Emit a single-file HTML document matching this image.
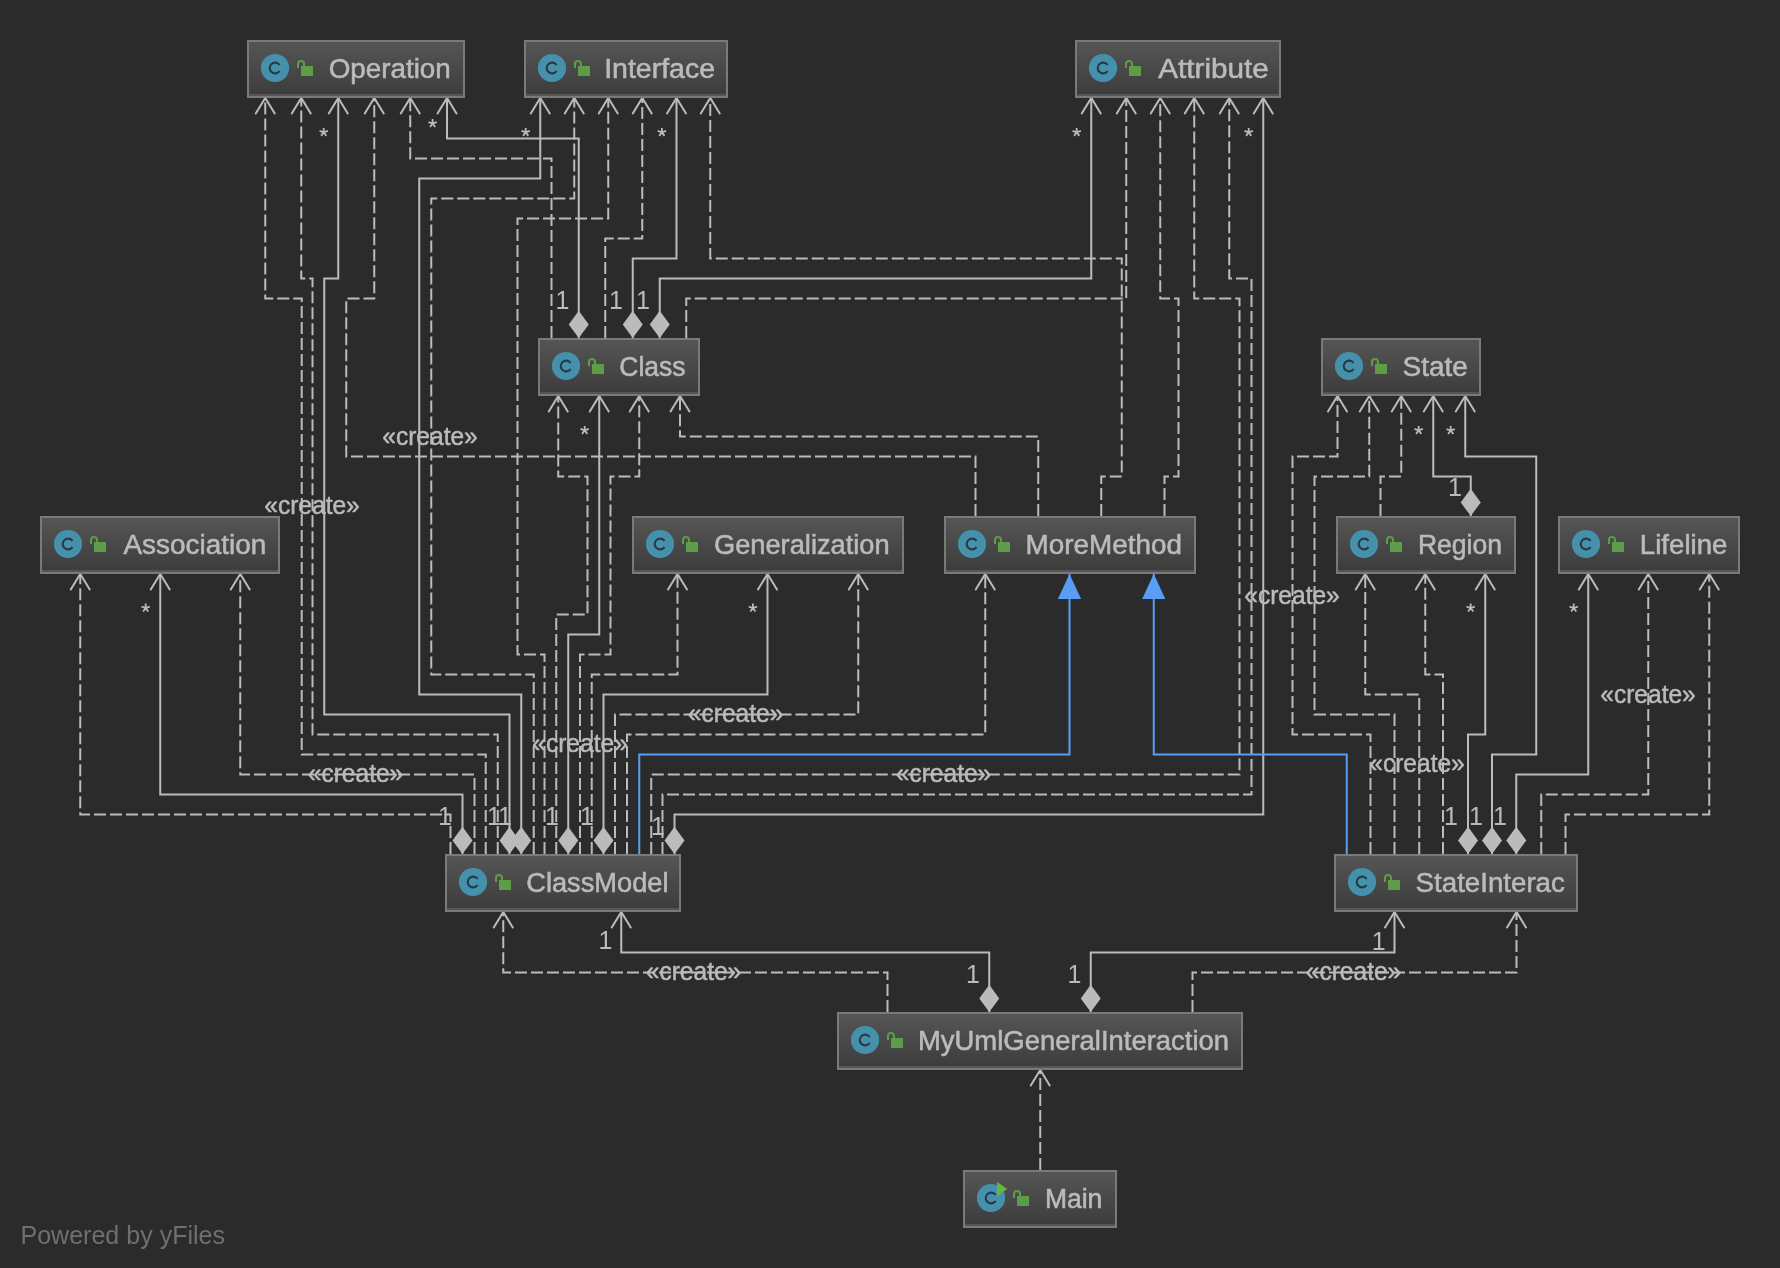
<!DOCTYPE html><html><head><meta charset="utf-8"><style>html,body{margin:0;padding:0;background:#2b2b2b;overflow:hidden}svg{display:block;will-change:transform}</style></head><body>
<svg width="1780" height="1268" viewBox="0 0 1780 1268">
<defs><linearGradient id="ng" x1="0" y1="0" x2="0" y2="1"><stop offset="0" stop-color="#555555"/><stop offset="1" stop-color="#3c3c3c"/></linearGradient></defs>
<rect width="1780" height="1268" fill="#2b2b2b"/>
<path d="M485.75 854 L485.75 754.5 L301.75 754.5 L301.75 298.5 L265.25 298.5 L265.25 98" fill="none" stroke="#bbbbbb" stroke-width="2" stroke-dasharray="12 4"/>
<path d="M255.75 113.5 L265.25 98 L274.75 113.5" fill="none" stroke="#bbbbbb" stroke-width="2" stroke-linecap="round" stroke-linejoin="miter"/>
<path d="M497.75 854 L497.75 734.5 L312.5 734.5 L312.5 278.5 L301.25 278.5 L301.25 98" fill="none" stroke="#bbbbbb" stroke-width="2" stroke-dasharray="12 4"/>
<path d="M291.75 113.5 L301.25 98 L310.75 113.5" fill="none" stroke="#bbbbbb" stroke-width="2" stroke-linecap="round" stroke-linejoin="miter"/>
<path d="M509.5 854 L509.5 714.5 L324.25 714.5 L324.25 278.5 L338.25 278.5 L338.25 98" fill="none" stroke="#bbbbbb" stroke-width="2"/>
<path d="M328.75 113.5 L338.25 98 L347.75 113.5" fill="none" stroke="#bbbbbb" stroke-width="2" stroke-linecap="round" stroke-linejoin="miter"/>
<path d="M509.5 854 L499.5 840.4 L509.5 826.8 L519.5 840.4 Z" fill="#bbbbbb"/>
<path d="M975.5 516 L975.5 456.5 L346.25 456.5 L346.25 298.5 L374.25 298.5 L374.25 98" fill="none" stroke="#bbbbbb" stroke-width="2" stroke-dasharray="12 4"/>
<path d="M364.75 113.5 L374.25 98 L383.75 113.5" fill="none" stroke="#bbbbbb" stroke-width="2" stroke-linecap="round" stroke-linejoin="miter"/>
<path d="M551.5 338 L551.5 158.5 L410.25 158.5 L410.25 98" fill="none" stroke="#bbbbbb" stroke-width="2" stroke-dasharray="12 4"/>
<path d="M400.75 113.5 L410.25 98 L419.75 113.5" fill="none" stroke="#bbbbbb" stroke-width="2" stroke-linecap="round" stroke-linejoin="miter"/>
<path d="M578.75 338 L578.75 138.5 L447 138.5 L447 98" fill="none" stroke="#bbbbbb" stroke-width="2"/>
<path d="M437.5 113.5 L447 98 L456.5 113.5" fill="none" stroke="#bbbbbb" stroke-width="2" stroke-linecap="round" stroke-linejoin="miter"/>
<path d="M578.75 338 L568.75 324.4 L578.75 310.8 L588.75 324.4 Z" fill="#bbbbbb"/>
<path d="M521.25 854 L521.25 694.5 L419.25 694.5 L419.25 178.5 L540.25 178.5 L540.25 98" fill="none" stroke="#bbbbbb" stroke-width="2"/>
<path d="M530.75 113.5 L540.25 98 L549.75 113.5" fill="none" stroke="#bbbbbb" stroke-width="2" stroke-linecap="round" stroke-linejoin="miter"/>
<path d="M521.25 854 L511.25 840.4 L521.25 826.8 L531.25 840.4 Z" fill="#bbbbbb"/>
<path d="M533.75 854 L533.75 674.5 L431.25 674.5 L431.25 198.5 L574.25 198.5 L574.25 98" fill="none" stroke="#bbbbbb" stroke-width="2" stroke-dasharray="12 4"/>
<path d="M564.75 113.5 L574.25 98 L583.75 113.5" fill="none" stroke="#bbbbbb" stroke-width="2" stroke-linecap="round" stroke-linejoin="miter"/>
<path d="M544.5 854 L544.5 654.5 L517.5 654.5 L517.5 218.5 L608.25 218.5 L608.25 98" fill="none" stroke="#bbbbbb" stroke-width="2" stroke-dasharray="12 4"/>
<path d="M598.75 113.5 L608.25 98 L617.75 113.5" fill="none" stroke="#bbbbbb" stroke-width="2" stroke-linecap="round" stroke-linejoin="miter"/>
<path d="M605.25 338 L605.25 238.5 L642.25 238.5 L642.25 98" fill="none" stroke="#bbbbbb" stroke-width="2" stroke-dasharray="12 4"/>
<path d="M632.75 113.5 L642.25 98 L651.75 113.5" fill="none" stroke="#bbbbbb" stroke-width="2" stroke-linecap="round" stroke-linejoin="miter"/>
<path d="M632.75 338 L632.75 258.5 L676.5 258.5 L676.5 98" fill="none" stroke="#bbbbbb" stroke-width="2"/>
<path d="M667 113.5 L676.5 98 L686 113.5" fill="none" stroke="#bbbbbb" stroke-width="2" stroke-linecap="round" stroke-linejoin="miter"/>
<path d="M632.75 338 L622.75 324.4 L632.75 310.8 L642.75 324.4 Z" fill="#bbbbbb"/>
<path d="M1101.25 516 L1101.25 476.5 L1121.75 476.5 L1121.75 258.5 L710.25 258.5 L710.25 98" fill="none" stroke="#bbbbbb" stroke-width="2" stroke-dasharray="12 4"/>
<path d="M700.75 113.5 L710.25 98 L719.75 113.5" fill="none" stroke="#bbbbbb" stroke-width="2" stroke-linecap="round" stroke-linejoin="miter"/>
<path d="M659.75 338 L659.75 278.5 L1091.25 278.5 L1091.25 98" fill="none" stroke="#bbbbbb" stroke-width="2"/>
<path d="M1081.75 113.5 L1091.25 98 L1100.75 113.5" fill="none" stroke="#bbbbbb" stroke-width="2" stroke-linecap="round" stroke-linejoin="miter"/>
<path d="M659.75 338 L649.75 324.4 L659.75 310.8 L669.75 324.4 Z" fill="#bbbbbb"/>
<path d="M686.25 338 L686.25 298.5 L1126.25 298.5 L1126.25 98" fill="none" stroke="#bbbbbb" stroke-width="2" stroke-dasharray="12 4"/>
<path d="M1116.75 113.5 L1126.25 98 L1135.75 113.5" fill="none" stroke="#bbbbbb" stroke-width="2" stroke-linecap="round" stroke-linejoin="miter"/>
<path d="M1164.5 516 L1164.5 476.5 L1178.5 476.5 L1178.5 298.5 L1160.25 298.5 L1160.25 98" fill="none" stroke="#bbbbbb" stroke-width="2" stroke-dasharray="12 4"/>
<path d="M1150.75 113.5 L1160.25 98 L1169.75 113.5" fill="none" stroke="#bbbbbb" stroke-width="2" stroke-linecap="round" stroke-linejoin="miter"/>
<path d="M651.25 854 L651.25 774.5 L1239.5 774.5 L1239.5 298.5 L1194.25 298.5 L1194.25 98" fill="none" stroke="#bbbbbb" stroke-width="2" stroke-dasharray="12 4"/>
<path d="M1184.75 113.5 L1194.25 98 L1203.75 113.5" fill="none" stroke="#bbbbbb" stroke-width="2" stroke-linecap="round" stroke-linejoin="miter"/>
<path d="M662.5 854 L662.5 794.5 L1251.5 794.5 L1251.5 278.5 L1229.25 278.5 L1229.25 98" fill="none" stroke="#bbbbbb" stroke-width="2" stroke-dasharray="12 4"/>
<path d="M1219.75 113.5 L1229.25 98 L1238.75 113.5" fill="none" stroke="#bbbbbb" stroke-width="2" stroke-linecap="round" stroke-linejoin="miter"/>
<path d="M674.5 854 L674.5 814.5 L1263.25 814.5 L1263.25 98" fill="none" stroke="#bbbbbb" stroke-width="2"/>
<path d="M1253.75 113.5 L1263.25 98 L1272.75 113.5" fill="none" stroke="#bbbbbb" stroke-width="2" stroke-linecap="round" stroke-linejoin="miter"/>
<path d="M674.5 854 L664.5 840.4 L674.5 826.8 L684.5 840.4 Z" fill="#bbbbbb"/>
<path d="M556.25 854 L556.25 614.5 L587.5 614.5 L587.5 476.5 L558.25 476.5 L558.25 396" fill="none" stroke="#bbbbbb" stroke-width="2" stroke-dasharray="12 4"/>
<path d="M548.75 411.5 L558.25 396 L567.75 411.5" fill="none" stroke="#bbbbbb" stroke-width="2" stroke-linecap="round" stroke-linejoin="miter"/>
<path d="M568.25 854 L568.25 634.5 L599.25 634.5 L599.25 396" fill="none" stroke="#bbbbbb" stroke-width="2"/>
<path d="M589.75 411.5 L599.25 396 L608.75 411.5" fill="none" stroke="#bbbbbb" stroke-width="2" stroke-linecap="round" stroke-linejoin="miter"/>
<path d="M568.25 854 L558.25 840.4 L568.25 826.8 L578.25 840.4 Z" fill="#bbbbbb"/>
<path d="M580 854 L580 654.5 L610.5 654.5 L610.5 476.5 L639.25 476.5 L639.25 396" fill="none" stroke="#bbbbbb" stroke-width="2" stroke-dasharray="12 4"/>
<path d="M629.75 411.5 L639.25 396 L648.75 411.5" fill="none" stroke="#bbbbbb" stroke-width="2" stroke-linecap="round" stroke-linejoin="miter"/>
<path d="M1038.25 516 L1038.25 436.5 L680 436.5 L680 396" fill="none" stroke="#bbbbbb" stroke-width="2" stroke-dasharray="12 4"/>
<path d="M670.5 411.5 L680 396 L689.5 411.5" fill="none" stroke="#bbbbbb" stroke-width="2" stroke-linecap="round" stroke-linejoin="miter"/>
<path d="M450.5 854 L450.5 814.5 L80.25 814.5 L80.25 574" fill="none" stroke="#bbbbbb" stroke-width="2" stroke-dasharray="12 4"/>
<path d="M70.75 589.5 L80.25 574 L89.75 589.5" fill="none" stroke="#bbbbbb" stroke-width="2" stroke-linecap="round" stroke-linejoin="miter"/>
<path d="M462.5 854 L462.5 794.5 L160.25 794.5 L160.25 574" fill="none" stroke="#bbbbbb" stroke-width="2"/>
<path d="M150.75 589.5 L160.25 574 L169.75 589.5" fill="none" stroke="#bbbbbb" stroke-width="2" stroke-linecap="round" stroke-linejoin="miter"/>
<path d="M462.5 854 L452.5 840.4 L462.5 826.8 L472.5 840.4 Z" fill="#bbbbbb"/>
<path d="M474.5 854 L474.5 774.5 L240.25 774.5 L240.25 574" fill="none" stroke="#bbbbbb" stroke-width="2" stroke-dasharray="12 4"/>
<path d="M230.75 589.5 L240.25 574 L249.75 589.5" fill="none" stroke="#bbbbbb" stroke-width="2" stroke-linecap="round" stroke-linejoin="miter"/>
<path d="M591.75 854 L591.75 674.5 L677.5 674.5 L677.5 574" fill="none" stroke="#bbbbbb" stroke-width="2" stroke-dasharray="12 4"/>
<path d="M668 589.5 L677.5 574 L687 589.5" fill="none" stroke="#bbbbbb" stroke-width="2" stroke-linecap="round" stroke-linejoin="miter"/>
<path d="M603.5 854 L603.5 694.5 L767.5 694.5 L767.5 574" fill="none" stroke="#bbbbbb" stroke-width="2"/>
<path d="M758 589.5 L767.5 574 L777 589.5" fill="none" stroke="#bbbbbb" stroke-width="2" stroke-linecap="round" stroke-linejoin="miter"/>
<path d="M603.5 854 L593.5 840.4 L603.5 826.8 L613.5 840.4 Z" fill="#bbbbbb"/>
<path d="M615 854 L615 714.5 L858.25 714.5 L858.25 574" fill="none" stroke="#bbbbbb" stroke-width="2" stroke-dasharray="12 4"/>
<path d="M848.75 589.5 L858.25 574 L867.75 589.5" fill="none" stroke="#bbbbbb" stroke-width="2" stroke-linecap="round" stroke-linejoin="miter"/>
<path d="M627 854 L627 734.5 L985.25 734.5 L985.25 574" fill="none" stroke="#bbbbbb" stroke-width="2" stroke-dasharray="12 4"/>
<path d="M975.75 589.5 L985.25 574 L994.75 589.5" fill="none" stroke="#bbbbbb" stroke-width="2" stroke-linecap="round" stroke-linejoin="miter"/>
<path d="M639.25 854 L639.25 754.5 L1069.5 754.5 L1069.5 574" fill="none" stroke="#589df6" stroke-width="2"/>
<path d="M1057.9 599 L1069.5 574 L1081.1 599 Z" fill="#589df6"/>
<path d="M1346.75 854 L1346.75 754.5 L1153.75 754.5 L1153.75 574" fill="none" stroke="#589df6" stroke-width="2"/>
<path d="M1142.15 599 L1153.75 574 L1165.35 599 Z" fill="#589df6"/>
<path d="M1370.5 854 L1370.5 734.5 L1292.5 734.5 L1292.5 456.5 L1337.5 456.5 L1337.5 396" fill="none" stroke="#bbbbbb" stroke-width="2" stroke-dasharray="12 4"/>
<path d="M1328 411.5 L1337.5 396 L1347 411.5" fill="none" stroke="#bbbbbb" stroke-width="2" stroke-linecap="round" stroke-linejoin="miter"/>
<path d="M1394.5 854 L1394.5 714.5 L1314.5 714.5 L1314.5 476.5 L1369.25 476.5 L1369.25 396" fill="none" stroke="#bbbbbb" stroke-width="2" stroke-dasharray="12 4"/>
<path d="M1359.75 411.5 L1369.25 396 L1378.75 411.5" fill="none" stroke="#bbbbbb" stroke-width="2" stroke-linecap="round" stroke-linejoin="miter"/>
<path d="M1380.5 516 L1380.5 476.5 L1401.25 476.5 L1401.25 396" fill="none" stroke="#bbbbbb" stroke-width="2" stroke-dasharray="12 4"/>
<path d="M1391.75 411.5 L1401.25 396 L1410.75 411.5" fill="none" stroke="#bbbbbb" stroke-width="2" stroke-linecap="round" stroke-linejoin="miter"/>
<path d="M1470.75 516 L1470.75 476.5 L1433.25 476.5 L1433.25 396" fill="none" stroke="#bbbbbb" stroke-width="2"/>
<path d="M1423.75 411.5 L1433.25 396 L1442.75 411.5" fill="none" stroke="#bbbbbb" stroke-width="2" stroke-linecap="round" stroke-linejoin="miter"/>
<path d="M1470.75 516 L1460.75 502.4 L1470.75 488.8 L1480.75 502.4 Z" fill="#bbbbbb"/>
<path d="M1492 854 L1492 754.5 L1536.25 754.5 L1536.25 456.5 L1465.25 456.5 L1465.25 396" fill="none" stroke="#bbbbbb" stroke-width="2"/>
<path d="M1455.75 411.5 L1465.25 396 L1474.75 411.5" fill="none" stroke="#bbbbbb" stroke-width="2" stroke-linecap="round" stroke-linejoin="miter"/>
<path d="M1492 854 L1482 840.4 L1492 826.8 L1502 840.4 Z" fill="#bbbbbb"/>
<path d="M1419.25 854 L1419.25 694.5 L1365.25 694.5 L1365.25 574" fill="none" stroke="#bbbbbb" stroke-width="2" stroke-dasharray="12 4"/>
<path d="M1355.75 589.5 L1365.25 574 L1374.75 589.5" fill="none" stroke="#bbbbbb" stroke-width="2" stroke-linecap="round" stroke-linejoin="miter"/>
<path d="M1443 854 L1443 674.5 L1425.25 674.5 L1425.25 574" fill="none" stroke="#bbbbbb" stroke-width="2" stroke-dasharray="12 4"/>
<path d="M1415.75 589.5 L1425.25 574 L1434.75 589.5" fill="none" stroke="#bbbbbb" stroke-width="2" stroke-linecap="round" stroke-linejoin="miter"/>
<path d="M1468 854 L1468 734.5 L1485.25 734.5 L1485.25 574" fill="none" stroke="#bbbbbb" stroke-width="2"/>
<path d="M1475.75 589.5 L1485.25 574 L1494.75 589.5" fill="none" stroke="#bbbbbb" stroke-width="2" stroke-linecap="round" stroke-linejoin="miter"/>
<path d="M1468 854 L1458 840.4 L1468 826.8 L1478 840.4 Z" fill="#bbbbbb"/>
<path d="M1516.25 854 L1516.25 774.5 L1588.25 774.5 L1588.25 574" fill="none" stroke="#bbbbbb" stroke-width="2"/>
<path d="M1578.75 589.5 L1588.25 574 L1597.75 589.5" fill="none" stroke="#bbbbbb" stroke-width="2" stroke-linecap="round" stroke-linejoin="miter"/>
<path d="M1516.25 854 L1506.25 840.4 L1516.25 826.8 L1526.25 840.4 Z" fill="#bbbbbb"/>
<path d="M1541.25 854 L1541.25 794.5 L1648.25 794.5 L1648.25 574" fill="none" stroke="#bbbbbb" stroke-width="2" stroke-dasharray="12 4"/>
<path d="M1638.75 589.5 L1648.25 574 L1657.75 589.5" fill="none" stroke="#bbbbbb" stroke-width="2" stroke-linecap="round" stroke-linejoin="miter"/>
<path d="M1565.5 854 L1565.5 814.5 L1709.25 814.5 L1709.25 574" fill="none" stroke="#bbbbbb" stroke-width="2" stroke-dasharray="12 4"/>
<path d="M1699.75 589.5 L1709.25 574 L1718.75 589.5" fill="none" stroke="#bbbbbb" stroke-width="2" stroke-linecap="round" stroke-linejoin="miter"/>
<path d="M887.5 1012 L887.5 972.5 L503.25 972.5 L503.25 912" fill="none" stroke="#bbbbbb" stroke-width="2" stroke-dasharray="12 4"/>
<path d="M493.75 927.5 L503.25 912 L512.75 927.5" fill="none" stroke="#bbbbbb" stroke-width="2" stroke-linecap="round" stroke-linejoin="miter"/>
<path d="M989.25 1012 L989.25 952.5 L621.25 952.5 L621.25 912" fill="none" stroke="#bbbbbb" stroke-width="2"/>
<path d="M611.75 927.5 L621.25 912 L630.75 927.5" fill="none" stroke="#bbbbbb" stroke-width="2" stroke-linecap="round" stroke-linejoin="miter"/>
<path d="M989.25 1012 L979.25 998.4 L989.25 984.8 L999.25 998.4 Z" fill="#bbbbbb"/>
<path d="M1090.75 1012 L1090.75 952.5 L1394.5 952.5 L1394.5 912" fill="none" stroke="#bbbbbb" stroke-width="2"/>
<path d="M1385 927.5 L1394.5 912 L1404 927.5" fill="none" stroke="#bbbbbb" stroke-width="2" stroke-linecap="round" stroke-linejoin="miter"/>
<path d="M1090.75 1012 L1080.75 998.4 L1090.75 984.8 L1100.75 998.4 Z" fill="#bbbbbb"/>
<path d="M1192.5 1012 L1192.5 972.5 L1516.5 972.5 L1516.5 912" fill="none" stroke="#bbbbbb" stroke-width="2" stroke-dasharray="12 4"/>
<path d="M1507 927.5 L1516.5 912 L1526 927.5" fill="none" stroke="#bbbbbb" stroke-width="2" stroke-linecap="round" stroke-linejoin="miter"/>
<path d="M1040.25 1170 L1040.25 1070" fill="none" stroke="#bbbbbb" stroke-width="2" stroke-dasharray="12 4"/>
<path d="M1030.75 1085.5 L1040.25 1070 L1049.75 1085.5" fill="none" stroke="#bbbbbb" stroke-width="2" stroke-linecap="round" stroke-linejoin="miter"/>
<g font-family="Liberation Sans, sans-serif" fill="#bbbbbb">
<path d="M323.7 132.3L323.7 127.9M323.7 132.3L327.88 130.94M323.7 132.3L326.29 135.86M323.7 132.3L321.11 135.86M323.7 132.3L319.52 130.94" stroke="#bbbbbb" stroke-width="1.8" fill="none"/>
<path d="M432.6 123.5L432.6 119.1M432.6 123.5L436.78 122.14M432.6 123.5L435.19 127.06M432.6 123.5L430.01 127.06M432.6 123.5L428.42 122.14" stroke="#bbbbbb" stroke-width="1.8" fill="none"/>
<path d="M525.7 132.3L525.7 127.9M525.7 132.3L529.88 130.94M525.7 132.3L528.29 135.86M525.7 132.3L523.11 135.86M525.7 132.3L521.52 130.94" stroke="#bbbbbb" stroke-width="1.8" fill="none"/>
<path d="M661.9 132.3L661.9 127.9M661.9 132.3L666.08 130.94M661.9 132.3L664.49 135.86M661.9 132.3L659.31 135.86M661.9 132.3L657.72 130.94" stroke="#bbbbbb" stroke-width="1.8" fill="none"/>
<path d="M1076.7 132.3L1076.7 127.9M1076.7 132.3L1080.88 130.94M1076.7 132.3L1079.29 135.86M1076.7 132.3L1074.11 135.86M1076.7 132.3L1072.52 130.94" stroke="#bbbbbb" stroke-width="1.8" fill="none"/>
<path d="M1248.7 132.3L1248.7 127.9M1248.7 132.3L1252.88 130.94M1248.7 132.3L1251.29 135.86M1248.7 132.3L1246.11 135.86M1248.7 132.3L1244.52 130.94" stroke="#bbbbbb" stroke-width="1.8" fill="none"/>
<path d="M584.7 430.3L584.7 425.9M584.7 430.3L588.88 428.94M584.7 430.3L587.29 433.86M584.7 430.3L582.11 433.86M584.7 430.3L580.52 428.94" stroke="#bbbbbb" stroke-width="1.8" fill="none"/>
<path d="M145.7 608L145.7 603.6M145.7 608L149.88 606.64M145.7 608L148.29 611.56M145.7 608L143.11 611.56M145.7 608L141.52 606.64" stroke="#bbbbbb" stroke-width="1.8" fill="none"/>
<path d="M752.9 608L752.9 603.6M752.9 608L757.08 606.64M752.9 608L755.49 611.56M752.9 608L750.31 611.56M752.9 608L748.72 606.64" stroke="#bbbbbb" stroke-width="1.8" fill="none"/>
<path d="M1418.7 430.3L1418.7 425.9M1418.7 430.3L1422.88 428.94M1418.7 430.3L1421.29 433.86M1418.7 430.3L1416.11 433.86M1418.7 430.3L1414.52 428.94" stroke="#bbbbbb" stroke-width="1.8" fill="none"/>
<path d="M1450.7 430.5L1450.7 426.1M1450.7 430.5L1454.88 429.14M1450.7 430.5L1453.29 434.06M1450.7 430.5L1448.11 434.06M1450.7 430.5L1446.52 429.14" stroke="#bbbbbb" stroke-width="1.8" fill="none"/>
<path d="M1470.7 608L1470.7 603.6M1470.7 608L1474.88 606.64M1470.7 608L1473.29 611.56M1470.7 608L1468.11 611.56M1470.7 608L1466.52 606.64" stroke="#bbbbbb" stroke-width="1.8" fill="none"/>
<path d="M1573.7 608L1573.7 603.6M1573.7 608L1577.88 606.64M1573.7 608L1576.29 611.56M1573.7 608L1571.11 611.56M1573.7 608L1569.52 606.64" stroke="#bbbbbb" stroke-width="1.8" fill="none"/>
<text x="562.5" y="309" font-size="25" text-anchor="middle">1</text>
<text x="616" y="309" font-size="25" text-anchor="middle">1</text>
<text x="643" y="309" font-size="25" text-anchor="middle">1</text>
<text x="1455" y="496" font-size="25" text-anchor="middle">1</text>
<text x="445" y="825" font-size="25" text-anchor="middle">1</text>
<text x="494" y="825" font-size="25" text-anchor="middle">1</text>
<text x="505" y="825" font-size="25" text-anchor="middle">1</text>
<text x="552" y="825" font-size="25" text-anchor="middle">1</text>
<text x="587" y="825" font-size="25" text-anchor="middle">1</text>
<text x="658" y="835" font-size="25" text-anchor="middle">1</text>
<text x="1451" y="825" font-size="25" text-anchor="middle">1</text>
<text x="1476" y="825" font-size="25" text-anchor="middle">1</text>
<text x="1500" y="825" font-size="25" text-anchor="middle">1</text>
<text x="605.5" y="949" font-size="25" text-anchor="middle">1</text>
<text x="973" y="983" font-size="25" text-anchor="middle">1</text>
<text x="1074.5" y="983" font-size="25" text-anchor="middle">1</text>
<text x="1378.75" y="950" font-size="25" text-anchor="middle">1</text>
<text x="312" y="513.5" font-size="25.5" text-anchor="middle" stroke="#bbbbbb" stroke-width="0.5" textLength="95.5" lengthAdjust="spacingAndGlyphs">«create»</text>
<text x="430" y="444.5" font-size="25.5" text-anchor="middle" stroke="#bbbbbb" stroke-width="0.5" textLength="95.5" lengthAdjust="spacingAndGlyphs">«create»</text>
<text x="355.5" y="782" font-size="25.5" text-anchor="middle" stroke="#bbbbbb" stroke-width="0.5" textLength="95.5" lengthAdjust="spacingAndGlyphs">«create»</text>
<text x="580" y="751.5" font-size="25.5" text-anchor="middle" stroke="#bbbbbb" stroke-width="0.5" textLength="95.5" lengthAdjust="spacingAndGlyphs">«create»</text>
<text x="735.6" y="722" font-size="25.5" text-anchor="middle" stroke="#bbbbbb" stroke-width="0.5" textLength="95.5" lengthAdjust="spacingAndGlyphs">«create»</text>
<text x="943.5" y="782" font-size="25.5" text-anchor="middle" stroke="#bbbbbb" stroke-width="0.5" textLength="95.5" lengthAdjust="spacingAndGlyphs">«create»</text>
<text x="1292" y="603.5" font-size="25.5" text-anchor="middle" stroke="#bbbbbb" stroke-width="0.5" textLength="95.5" lengthAdjust="spacingAndGlyphs">«create»</text>
<text x="1417" y="772" font-size="25.5" text-anchor="middle" stroke="#bbbbbb" stroke-width="0.5" textLength="95.5" lengthAdjust="spacingAndGlyphs">«create»</text>
<text x="1648" y="702.5" font-size="25.5" text-anchor="middle" stroke="#bbbbbb" stroke-width="0.5" textLength="95.5" lengthAdjust="spacingAndGlyphs">«create»</text>
<text x="693.5" y="980" font-size="25.5" text-anchor="middle" stroke="#bbbbbb" stroke-width="0.5" textLength="95.5" lengthAdjust="spacingAndGlyphs">«create»</text>
<text x="1353.5" y="980" font-size="25.5" text-anchor="middle" stroke="#bbbbbb" stroke-width="0.5" textLength="95.5" lengthAdjust="spacingAndGlyphs">«create»</text>
</g>
<g>
<rect x="247" y="40" width="218" height="58" fill="#7a7a7a"/>
<rect x="249" y="42" width="214" height="54" fill="url(#ng)"/>
<rect x="249" y="94" width="214" height="2" fill="#555555"/>
<circle cx="275" cy="68" r="14.1" fill="#4590ab"/>
<path d="M279.6 65 A5.4 5.4 0 1 0 279.6 71" fill="none" stroke="#263a44" stroke-width="2.1"/>
<rect x="301" y="66" width="12" height="10" fill="#5e9c47"/>
<path d="M298 68 L298 64 A3 3 0 0 1 304 64 L304 67" fill="none" stroke="#5e9c47" stroke-width="2"/>
<text x="328.7" y="77.6" font-family="Liberation Sans, sans-serif" font-size="27" fill="#bbbbbb" stroke="#bbbbbb" stroke-width="0.55" textLength="122.03" lengthAdjust="spacingAndGlyphs">Operation</text>
</g>
<g>
<rect x="524" y="40" width="204" height="58" fill="#7a7a7a"/>
<rect x="526" y="42" width="200" height="54" fill="url(#ng)"/>
<rect x="526" y="94" width="200" height="2" fill="#555555"/>
<circle cx="552" cy="68" r="14.1" fill="#4590ab"/>
<path d="M556.6 65 A5.4 5.4 0 1 0 556.6 71" fill="none" stroke="#263a44" stroke-width="2.1"/>
<rect x="578" y="66" width="12" height="10" fill="#5e9c47"/>
<path d="M575 68 L575 64 A3 3 0 0 1 581 64 L581 67" fill="none" stroke="#5e9c47" stroke-width="2"/>
<text x="604.15" y="77.6" font-family="Liberation Sans, sans-serif" font-size="27" fill="#bbbbbb" stroke="#bbbbbb" stroke-width="0.55" textLength="110.85" lengthAdjust="spacingAndGlyphs">Interface</text>
</g>
<g>
<rect x="1075" y="40" width="206" height="58" fill="#7a7a7a"/>
<rect x="1077" y="42" width="202" height="54" fill="url(#ng)"/>
<rect x="1077" y="94" width="202" height="2" fill="#555555"/>
<circle cx="1103" cy="68" r="14.1" fill="#4590ab"/>
<path d="M1107.6 65 A5.4 5.4 0 1 0 1107.6 71" fill="none" stroke="#263a44" stroke-width="2.1"/>
<rect x="1129" y="66" width="12" height="10" fill="#5e9c47"/>
<path d="M1126 68 L1126 64 A3 3 0 0 1 1132 64 L1132 67" fill="none" stroke="#5e9c47" stroke-width="2"/>
<text x="1158.25" y="77.6" font-family="Liberation Sans, sans-serif" font-size="27" fill="#bbbbbb" stroke="#bbbbbb" stroke-width="0.55" textLength="110.5" lengthAdjust="spacingAndGlyphs">Attribute</text>
</g>
<g>
<rect x="538" y="338" width="162" height="58" fill="#7a7a7a"/>
<rect x="540" y="340" width="158" height="54" fill="url(#ng)"/>
<rect x="540" y="392" width="158" height="2" fill="#555555"/>
<circle cx="566" cy="366" r="14.1" fill="#4590ab"/>
<path d="M570.6 363 A5.4 5.4 0 1 0 570.6 369" fill="none" stroke="#263a44" stroke-width="2.1"/>
<rect x="592" y="364" width="12" height="10" fill="#5e9c47"/>
<path d="M589 366 L589 362 A3 3 0 0 1 595 362 L595 365" fill="none" stroke="#5e9c47" stroke-width="2"/>
<text x="619.25" y="375.6" font-family="Liberation Sans, sans-serif" font-size="27" fill="#bbbbbb" stroke="#bbbbbb" stroke-width="0.55" textLength="66.25" lengthAdjust="spacingAndGlyphs">Class</text>
</g>
<g>
<rect x="1321" y="338" width="160" height="58" fill="#7a7a7a"/>
<rect x="1323" y="340" width="156" height="54" fill="url(#ng)"/>
<rect x="1323" y="392" width="156" height="2" fill="#555555"/>
<circle cx="1349" cy="366" r="14.1" fill="#4590ab"/>
<path d="M1353.6 363 A5.4 5.4 0 1 0 1353.6 369" fill="none" stroke="#263a44" stroke-width="2.1"/>
<rect x="1375" y="364" width="12" height="10" fill="#5e9c47"/>
<path d="M1372 366 L1372 362 A3 3 0 0 1 1378 362 L1378 365" fill="none" stroke="#5e9c47" stroke-width="2"/>
<text x="1402.62" y="375.6" font-family="Liberation Sans, sans-serif" font-size="27" fill="#bbbbbb" stroke="#bbbbbb" stroke-width="0.55" textLength="65.12" lengthAdjust="spacingAndGlyphs">State</text>
</g>
<g>
<rect x="40" y="516" width="240" height="58" fill="#7a7a7a"/>
<rect x="42" y="518" width="236" height="54" fill="url(#ng)"/>
<rect x="42" y="570" width="236" height="2" fill="#555555"/>
<circle cx="68" cy="544" r="14.1" fill="#4590ab"/>
<path d="M72.6 541 A5.4 5.4 0 1 0 72.6 547" fill="none" stroke="#263a44" stroke-width="2.1"/>
<rect x="94" y="542" width="12" height="10" fill="#5e9c47"/>
<path d="M91 544 L91 540 A3 3 0 0 1 97 540 L97 543" fill="none" stroke="#5e9c47" stroke-width="2"/>
<text x="123.5" y="553.6" font-family="Liberation Sans, sans-serif" font-size="27" fill="#bbbbbb" stroke="#bbbbbb" stroke-width="0.55" textLength="142.75" lengthAdjust="spacingAndGlyphs">Association</text>
</g>
<g>
<rect x="632" y="516" width="272" height="58" fill="#7a7a7a"/>
<rect x="634" y="518" width="268" height="54" fill="url(#ng)"/>
<rect x="634" y="570" width="268" height="2" fill="#555555"/>
<circle cx="660" cy="544" r="14.1" fill="#4590ab"/>
<path d="M664.6 541 A5.4 5.4 0 1 0 664.6 547" fill="none" stroke="#263a44" stroke-width="2.1"/>
<rect x="686" y="542" width="12" height="10" fill="#5e9c47"/>
<path d="M683 544 L683 540 A3 3 0 0 1 689 540 L689 543" fill="none" stroke="#5e9c47" stroke-width="2"/>
<text x="714" y="553.6" font-family="Liberation Sans, sans-serif" font-size="27" fill="#bbbbbb" stroke="#bbbbbb" stroke-width="0.55" textLength="175.62" lengthAdjust="spacingAndGlyphs">Generalization</text>
</g>
<g>
<rect x="944" y="516" width="252" height="58" fill="#7a7a7a"/>
<rect x="946" y="518" width="248" height="54" fill="url(#ng)"/>
<rect x="946" y="570" width="248" height="2" fill="#555555"/>
<circle cx="972" cy="544" r="14.1" fill="#4590ab"/>
<path d="M976.6 541 A5.4 5.4 0 1 0 976.6 547" fill="none" stroke="#263a44" stroke-width="2.1"/>
<rect x="998" y="542" width="12" height="10" fill="#5e9c47"/>
<path d="M995 544 L995 540 A3 3 0 0 1 1001 540 L1001 543" fill="none" stroke="#5e9c47" stroke-width="2"/>
<text x="1025.5" y="553.6" font-family="Liberation Sans, sans-serif" font-size="27" fill="#bbbbbb" stroke="#bbbbbb" stroke-width="0.55" textLength="156.38" lengthAdjust="spacingAndGlyphs">MoreMethod</text>
</g>
<g>
<rect x="1336" y="516" width="180" height="58" fill="#7a7a7a"/>
<rect x="1338" y="518" width="176" height="54" fill="url(#ng)"/>
<rect x="1338" y="570" width="176" height="2" fill="#555555"/>
<circle cx="1364" cy="544" r="14.1" fill="#4590ab"/>
<path d="M1368.6 541 A5.4 5.4 0 1 0 1368.6 547" fill="none" stroke="#263a44" stroke-width="2.1"/>
<rect x="1390" y="542" width="12" height="10" fill="#5e9c47"/>
<path d="M1387 544 L1387 540 A3 3 0 0 1 1393 540 L1393 543" fill="none" stroke="#5e9c47" stroke-width="2"/>
<text x="1417.88" y="553.6" font-family="Liberation Sans, sans-serif" font-size="27" fill="#bbbbbb" stroke="#bbbbbb" stroke-width="0.55" textLength="84.12" lengthAdjust="spacingAndGlyphs">Region</text>
</g>
<g>
<rect x="1558" y="516" width="182" height="58" fill="#7a7a7a"/>
<rect x="1560" y="518" width="178" height="54" fill="url(#ng)"/>
<rect x="1560" y="570" width="178" height="2" fill="#555555"/>
<circle cx="1586" cy="544" r="14.1" fill="#4590ab"/>
<path d="M1590.6 541 A5.4 5.4 0 1 0 1590.6 547" fill="none" stroke="#263a44" stroke-width="2.1"/>
<rect x="1612" y="542" width="12" height="10" fill="#5e9c47"/>
<path d="M1609 544 L1609 540 A3 3 0 0 1 1615 540 L1615 543" fill="none" stroke="#5e9c47" stroke-width="2"/>
<text x="1639.88" y="553.6" font-family="Liberation Sans, sans-serif" font-size="27" fill="#bbbbbb" stroke="#bbbbbb" stroke-width="0.55" textLength="87.5" lengthAdjust="spacingAndGlyphs">Lifeline</text>
</g>
<g>
<rect x="445" y="854" width="236" height="58" fill="#7a7a7a"/>
<rect x="447" y="856" width="232" height="54" fill="url(#ng)"/>
<rect x="447" y="908" width="232" height="2" fill="#555555"/>
<circle cx="473" cy="882" r="14.1" fill="#4590ab"/>
<path d="M477.6 879 A5.4 5.4 0 1 0 477.6 885" fill="none" stroke="#263a44" stroke-width="2.1"/>
<rect x="499" y="880" width="12" height="10" fill="#5e9c47"/>
<path d="M496 882 L496 878 A3 3 0 0 1 502 878 L502 881" fill="none" stroke="#5e9c47" stroke-width="2"/>
<text x="526.25" y="891.6" font-family="Liberation Sans, sans-serif" font-size="27" fill="#bbbbbb" stroke="#bbbbbb" stroke-width="0.55" textLength="142.25" lengthAdjust="spacingAndGlyphs">ClassModel</text>
</g>
<g>
<rect x="1334" y="854" width="244" height="58" fill="#7a7a7a"/>
<rect x="1336" y="856" width="240" height="54" fill="url(#ng)"/>
<rect x="1336" y="908" width="240" height="2" fill="#555555"/>
<circle cx="1362" cy="882" r="14.1" fill="#4590ab"/>
<path d="M1366.6 879 A5.4 5.4 0 1 0 1366.6 885" fill="none" stroke="#263a44" stroke-width="2.1"/>
<rect x="1388" y="880" width="12" height="10" fill="#5e9c47"/>
<path d="M1385 882 L1385 878 A3 3 0 0 1 1391 878 L1391 881" fill="none" stroke="#5e9c47" stroke-width="2"/>
<text x="1415.62" y="891.6" font-family="Liberation Sans, sans-serif" font-size="27" fill="#bbbbbb" stroke="#bbbbbb" stroke-width="0.55" textLength="149.25" lengthAdjust="spacingAndGlyphs">StateInterac</text>
</g>
<g>
<rect x="837" y="1012" width="406" height="58" fill="#7a7a7a"/>
<rect x="839" y="1014" width="402" height="54" fill="url(#ng)"/>
<rect x="839" y="1066" width="402" height="2" fill="#555555"/>
<circle cx="865" cy="1040" r="14.1" fill="#4590ab"/>
<path d="M869.6 1037 A5.4 5.4 0 1 0 869.6 1043" fill="none" stroke="#263a44" stroke-width="2.1"/>
<rect x="891" y="1038" width="12" height="10" fill="#5e9c47"/>
<path d="M888 1040 L888 1036 A3 3 0 0 1 894 1036 L894 1039" fill="none" stroke="#5e9c47" stroke-width="2"/>
<text x="918" y="1049.6" font-family="Liberation Sans, sans-serif" font-size="27" fill="#bbbbbb" stroke="#bbbbbb" stroke-width="0.55" textLength="311" lengthAdjust="spacingAndGlyphs">MyUmlGeneralInteraction</text>
</g>
<g>
<rect x="963" y="1170" width="154" height="58" fill="#7a7a7a"/>
<rect x="965" y="1172" width="150" height="54" fill="url(#ng)"/>
<rect x="965" y="1224" width="150" height="2" fill="#555555"/>
<circle cx="991" cy="1198" r="14.1" fill="#4590ab"/>
<path d="M995.6 1195 A5.4 5.4 0 1 0 995.6 1201" fill="none" stroke="#263a44" stroke-width="2.1"/>
<path d="M997 1181.8 L1007.2 1189 L997 1196.2 Z" fill="#5fb83f"/>
<rect x="1017" y="1196" width="12" height="10" fill="#5e9c47"/>
<path d="M1014 1198 L1014 1194 A3 3 0 0 1 1020 1194 L1020 1197" fill="none" stroke="#5e9c47" stroke-width="2"/>
<text x="1044.88" y="1207.6" font-family="Liberation Sans, sans-serif" font-size="27" fill="#bbbbbb" stroke="#bbbbbb" stroke-width="0.55" textLength="57.5" lengthAdjust="spacingAndGlyphs">Main</text>
</g>
<text x="20.5" y="1243.8" font-family="Liberation Sans, sans-serif" font-size="25" fill="#6f6f6f" textLength="204.5" lengthAdjust="spacingAndGlyphs">Powered by yFiles</text>
</svg></body></html>
